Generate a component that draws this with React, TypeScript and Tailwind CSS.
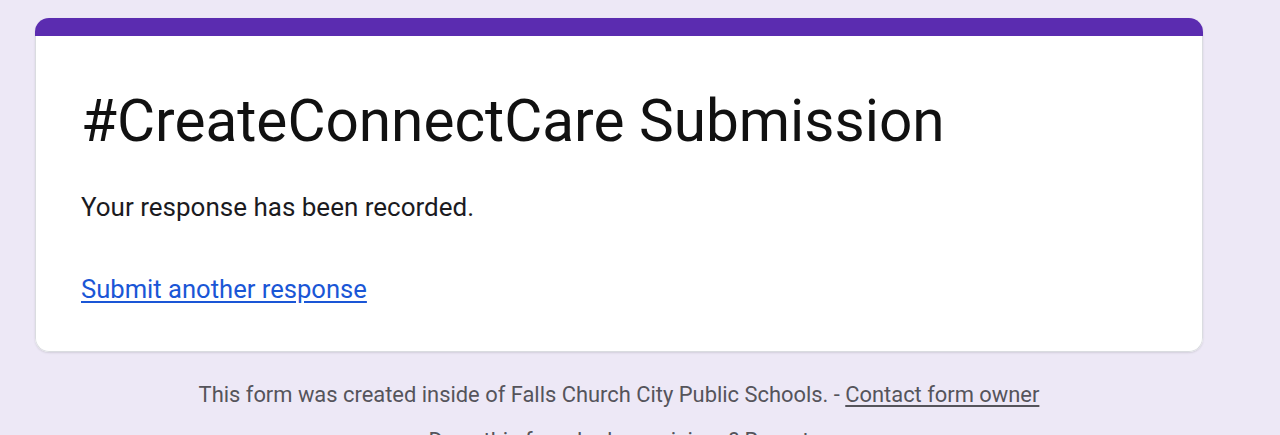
import React from "react";

export default function App() {
  return (
    <div className="min-h-screen bg-[#ede8f6] pt-[18px] font-['Roboto',sans-serif]">
      <div className="ml-[35px] w-[1168px]">
        <div className="overflow-hidden rounded-[14px] bg-white shadow-[0_1px_2px_rgba(60,64,67,0.15)]">
          <div className="h-[18px] bg-[#5b2cb0]" />
          <div className="rounded-b-[14px] border border-t-0 border-[#dadce0] px-[45px] pb-[44px] pt-[49px]">
            <h1 className="text-[58.5px] font-normal leading-[73px] text-[#111111]">
              #CreateConnectCare Submission
            </h1>
            <p className="mt-[31px] text-[26px] leading-[36px] text-[#1b1b1f]">
              Your response has been recorded.
            </p>
            <a
              href="#"
              className="mt-[46px] block w-fit text-[25.6px] leading-[36px] text-[#1a56d6] underline underline-offset-[3px]"
            >
              Submit another response
            </a>
          </div>
        </div>
        <div className="mt-[28px] text-center text-[21.9px] leading-[30px] text-[#55545b]">
          <p>
            This form was created inside of Falls Church City Public Schools. -{" "}
            <a href="#" className="underline underline-offset-[3px]">
              Contact form owner
            </a>
          </p>
          <p className="mt-[16px]">
            Does this form look suspicious?{" "}
            <a href="#" className="underline underline-offset-[3px]">
              Report
            </a>
          </p>
        </div>
      </div>
    </div>
  );
}
